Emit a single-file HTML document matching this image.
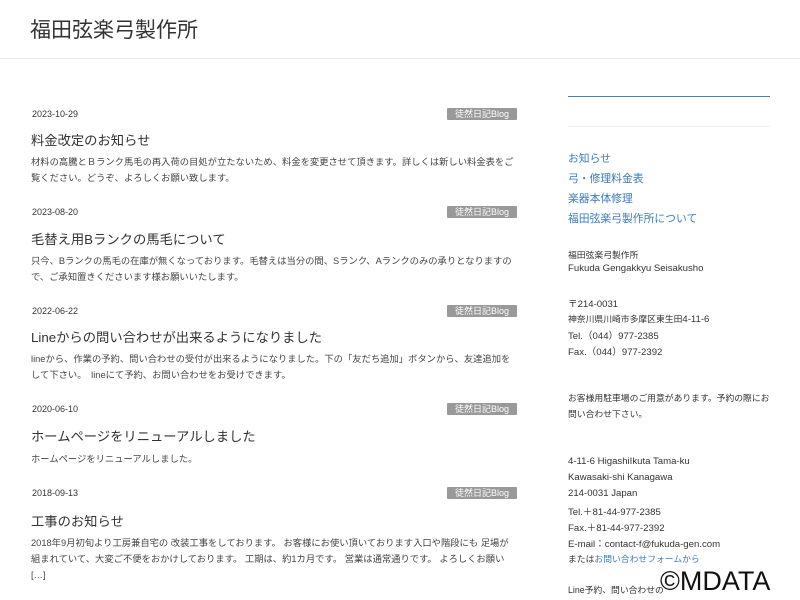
<!DOCTYPE html>
<html><head><meta charset="utf-8"><style>
body{margin:0;width:800px;height:600px;overflow:hidden;background:#fff;font-family:"Liberation Sans","Noto Sans CJK JP",sans-serif;color:#333;position:relative}
.a{position:absolute;white-space:nowrap}
.h{left:30px;top:14px;font-size:21px;color:#333}
.hr{position:absolute;left:0;width:800px;top:58px;height:1px;background:#e8e8e8}
.d{left:32px;font-size:9px;color:#333}
.tag{position:absolute;left:447px;width:70px;height:12px;background:#999;color:#fff;font-size:9px;line-height:12px;text-align:center;border-radius:1px}
.t{left:31px;font-size:13.3px;color:#333}
.b{left:31px;font-size:9.3px;line-height:16px;color:#444}
.l{left:568px;font-size:10.8px;color:#3a7cc0}
.s{left:568px;font-size:8.8px;color:#333}
.e{font-size:9.6px}
</style></head><body>
<div class="a h">福田弦楽弓製作所</div>
<div class="hr"></div>

<div class="a d" style="top:109px">2023-10-29</div><div class="tag" style="top:108px">徒然日記Blog</div>
<div class="a t" style="top:130px">料金改定のお知らせ</div>
<div class="a b" style="top:154px">材料の高騰とＢランク馬毛の再入荷の目処が立たないため、料金を変更させて頂きます。詳しくは新しい料金表をご<br>覧ください。どうぞ、よろしくお願い致します。</div>

<div class="a d" style="top:207px">2023-08-20</div><div class="tag" style="top:206px">徒然日記Blog</div>
<div class="a t" style="top:229px">毛替え用Bランクの馬毛について</div>
<div class="a b" style="top:253px">只今、Bランクの馬毛の在庫が無くなっております。毛替えは当分の間、Sランク、Aランクのみの承りとなりますの<br>で、ご承知置きくださいます様お願いいたします。</div>

<div class="a d" style="top:306px">2022-06-22</div><div class="tag" style="top:305px">徒然日記Blog</div>
<div class="a t" style="top:327px">Lineからの問い合わせが出来るようになりました</div>
<div class="a b" style="top:351px">lineから、作業の予約、問い合わせの受付が出来るようになりました。下の「友だち追加」ボタンから、友達追加を<br>して下さい。　lineにて予約、お問い合わせをお受けできます。</div>

<div class="a d" style="top:404px">2020-06-10</div><div class="tag" style="top:403px">徒然日記Blog</div>
<div class="a t" style="top:426px">ホームページをリニューアルしました</div>
<div class="a b" style="top:451px">ホームページをリニューアルしました。</div>

<div class="a d" style="top:488px">2018-09-13</div><div class="tag" style="top:487px">徒然日記Blog</div>
<div class="a t" style="top:511px">工事のお知らせ</div>
<div class="a b" style="top:535px">2018年9月初旬より工房兼自宅の 改装工事をしております。 お客様にお使い頂いております入口や階段にも 足場が<br>組まれていて、大変ご不便をおかけしております。 工期は、約1カ月です。 営業は通常通りです。 よろしくお願い<br>[…]</div>

<div style="position:absolute;left:568px;top:96px;width:202px;height:1px;background:#4a7fb5"></div>
<div style="position:absolute;left:568px;top:126px;width:202px;height:1px;background:#eee"></div>
<div class="a l" style="top:150px">お知らせ</div>
<div class="a l" style="top:170px">弓・修理料金表</div>
<div class="a l" style="top:190px">楽器本体修理</div>
<div class="a l" style="top:210px">福田弦楽弓製作所について</div>

<div class="a s" style="top:248px">福田弦楽弓製作所</div>
<div class="a s e" style="top:263px">Fukuda Gengakkyu Seisakusho</div>
<div class="a s e" style="top:296px">〒214-0031</div>
<div class="a s" style="top:312px">神奈川県川崎市多摩区東生田<span class="e">4-11-6</span></div>
<div class="a s e" style="top:328px">Tel.（044）977-2385</div>
<div class="a s e" style="top:344px">Fax.（044）977-2392</div>
<div class="a s" style="top:391px">お客様用駐車場のご用意があります。予約の際にお</div>
<div class="a s" style="top:407px">問い合わせ下さい。</div>
<div class="a s e" style="top:456px">4-11-6 HigashiIkuta Tama-ku</div>
<div class="a s e" style="top:472px">Kawasaki-shi Kanagawa</div>
<div class="a s e" style="top:488px">214-0031 Japan</div>
<div class="a s e" style="top:504px">Tel.＋81-44-977-2385</div>
<div class="a s e" style="top:520px">Fax.＋81-44-977-2392</div>
<div class="a s e" style="top:536px">E-mail：contact-f@fukuda-gen.com</div>
<div class="a s" style="top:552px">または<span style="color:#3a7cc0">お問い合わせフォームから</span></div>
<div class="a s" style="top:583px">Line予約、問い合わせの</div>
<div class="a" style="left:660px;top:566px;font-size:27px;color:#111">©MDATA</div>
</body></html>
